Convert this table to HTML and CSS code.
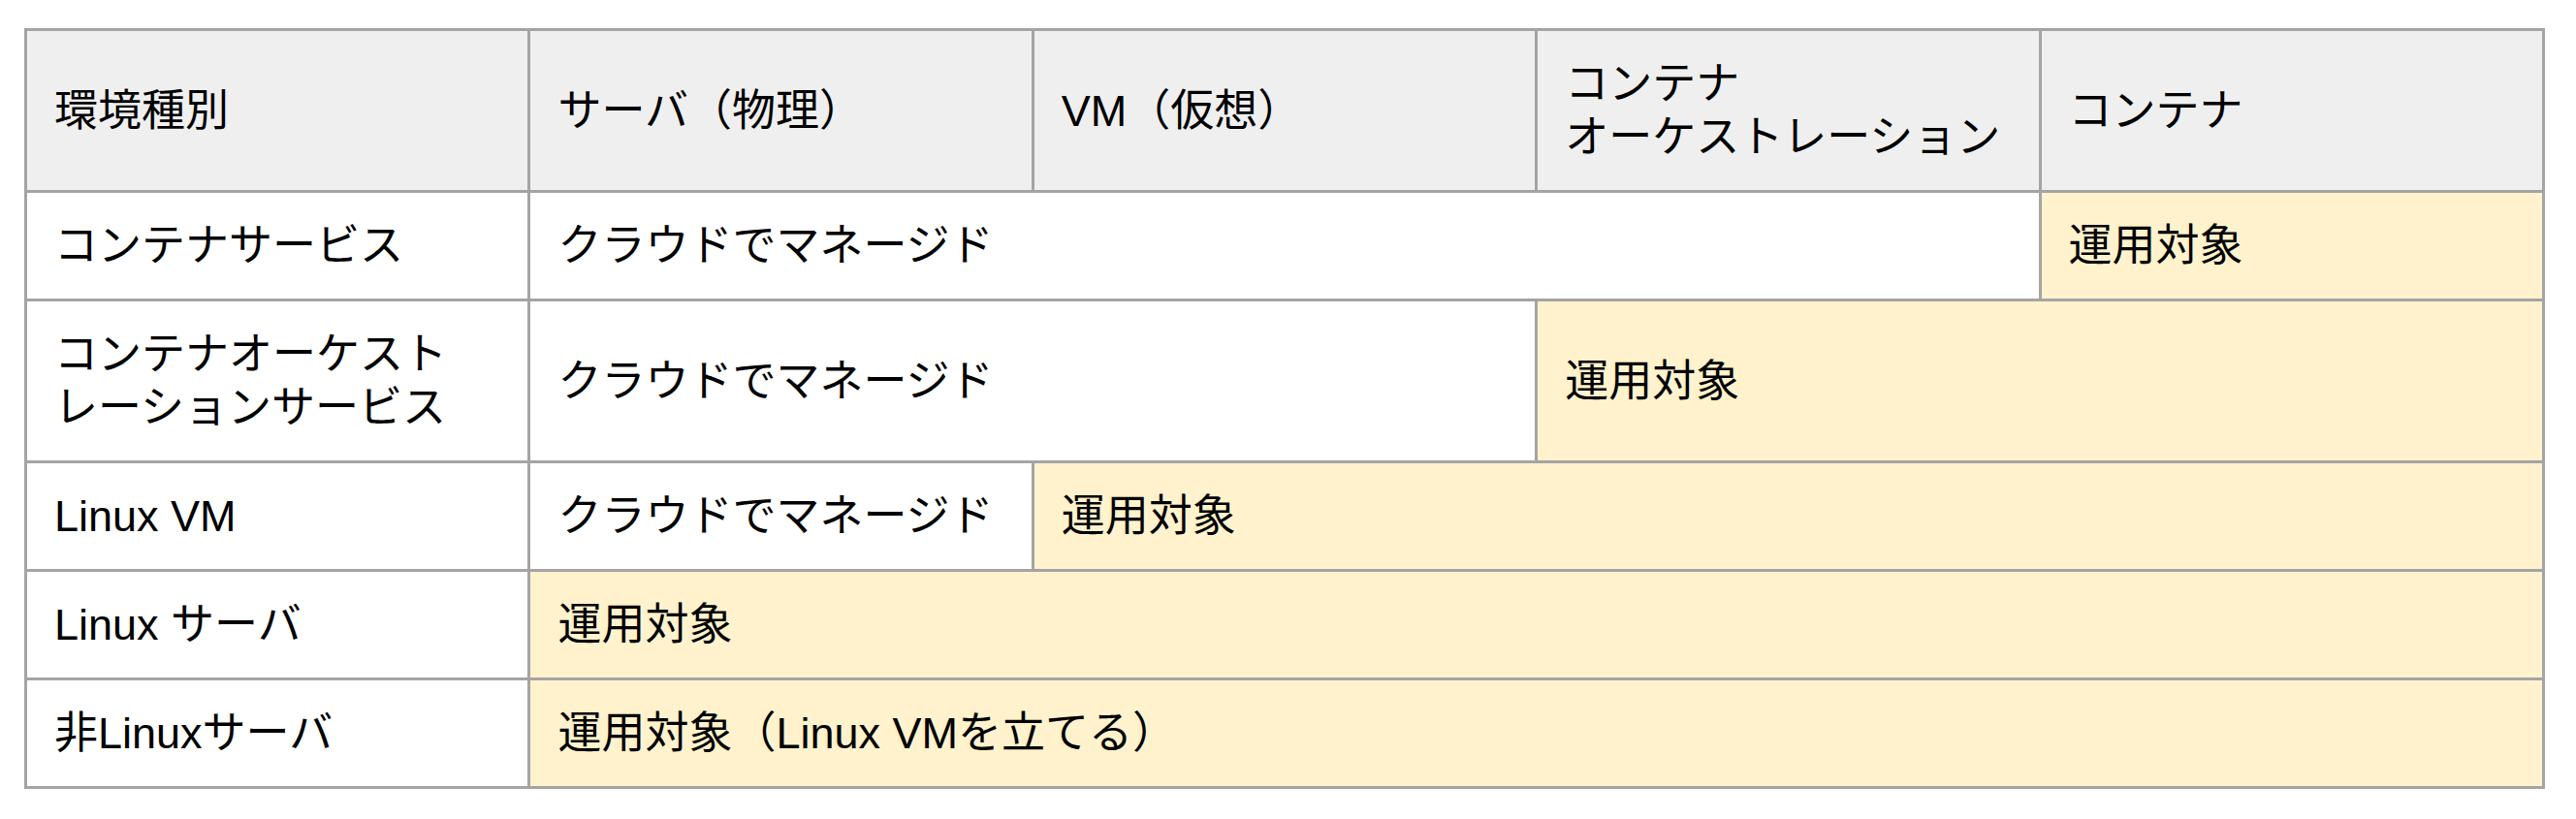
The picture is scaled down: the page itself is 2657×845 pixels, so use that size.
FILE: index.html
```html
<!DOCTYPE html>
<html lang="ja">
<head>
<meta charset="utf-8">
<title>環境種別</title>
<link rel="stylesheet" href="styles.css">
</head>
<body>
<table class="env-table">
  <colgroup>
    <col class="col"><col class="col"><col class="col"><col class="col"><col class="col">
  </colgroup>
  <thead>
    <tr class="head-row">
      <th>環境種別</th>
      <th>サーバ（物理）</th>
      <th>VM（仮想）</th>
      <th>コンテナ<br>オーケストレーション</th>
      <th>コンテナ</th>
    </tr>
  </thead>
  <tbody>
    <tr>
      <td>コンテナサービス</td>
      <td colspan="3">クラウドでマネージド</td>
      <td class="target">運用対象</td>
    </tr>
    <tr>
      <td>コンテナオーケスト<br>レーションサービス</td>
      <td colspan="2">クラウドでマネージド</td>
      <td colspan="2" class="target">運用対象</td>
    </tr>
    <tr>
      <td>Linux VM</td>
      <td>クラウドでマネージド</td>
      <td colspan="3" class="target">運用対象</td>
    </tr>
    <tr>
      <td>Linux サーバ</td>
      <td colspan="4" class="target">運用対象</td>
    </tr>
    <tr>
      <td>非Linuxサーバ</td>
      <td colspan="4" class="target">運用対象（Linux VMを立てる）</td>
    </tr>
  </tbody>
</table>
</body>
</html>
```

FILE: styles.css
```css
html, body {
  margin: 0;
  padding: 0;
  background: #ffffff;
}

body {
  padding: 29px 0 0 25px;
  font-family: "Liberation Sans", "Noto Sans CJK JP", sans-serif;
  color: #000000;
}

.env-table {
  border-collapse: collapse;
  table-layout: fixed;
  width: 2600px;
  font-size: 45px;
  line-height: 55px;
}

.col {
  width: 20%;
}

.env-table th,
.env-table td {
  border: 3px solid #a4a4a4;
  padding: 27px 28px;
  text-align: left;
  vertical-align: middle;
  font-weight: normal;
  background: #ffffff;
}

.head-row th {
  background: #efefef;
}

.env-table td.target {
  background: #fff2cc;
}
```
